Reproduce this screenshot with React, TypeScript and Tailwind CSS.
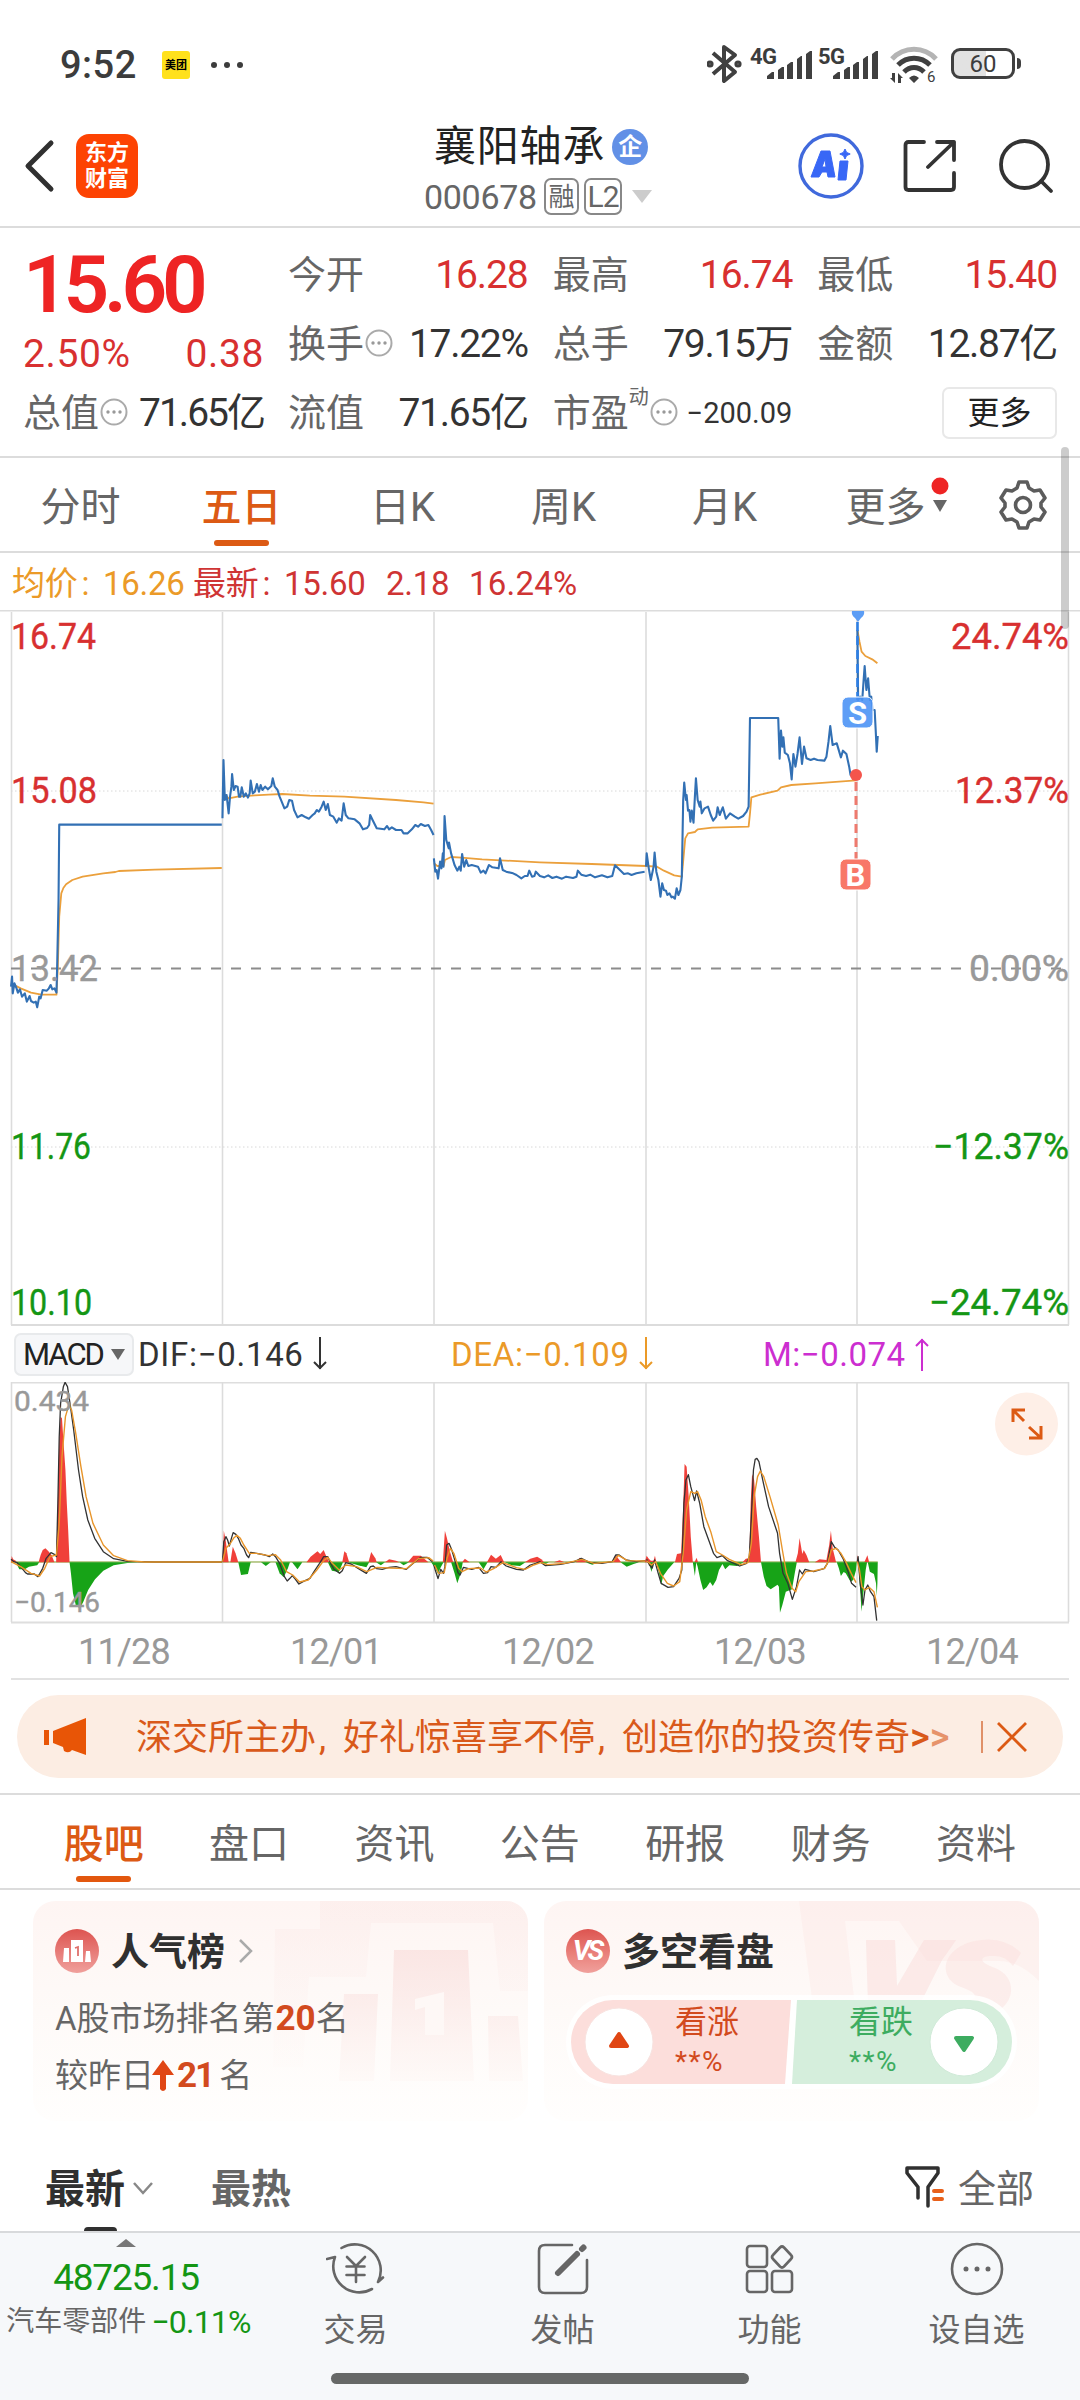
import React from "react";

const FONT = "font-['Roboto','Noto_Sans_CJK_SC',sans-serif]";

const PRICE_SEGMENTS = [
  "32,1160 35,1130 37,1180 42,1150 48,1165 52,1178 58,1168 64,1190 72,1180 78,1205 86,1188 90,1203 98,1208 104,1205 108,1222 114,1190 118,1195 124,1170 136,1172 142,1165 147,1155 152,1168 158,1165 164,1178 166,1100 170,900 172,674 644,674",
  "646,655 649,480 653,600 658,585 664,640 668,590 672,560 674,522 679,570 684,558 690,560 694,590 698,590 702,562 708,590 714,580 720,593 725,580 728,542 734,580 740,575 746,552 752,575 757,555 762,570 770,560 778,568 788,558 792,535 798,560 806,570 812,590 818,605 826,625 834,620 840,600 848,602 854,630 864,652 876,645 888,652 897,656 908,645 914,640 920,630 926,635 934,620 940,605 946,630 952,612 958,645 968,650 978,668 984,655 992,662 998,610 1004,645 1012,655 1030,658 1044,670 1054,688 1066,684 1072,675 1075,645 1082,660 1094,685 1116,688 1124,678 1130,688 1138,682 1150,690 1166,690 1172,700 1184,700 1196,688 1206,675 1214,680 1222,672 1234,678 1244,675 1252,690 1259,705",
  "1260,775 1264,815 1268,810 1272,836 1278,785 1282,805 1286,760 1288,800 1291,648 1296,720 1303,745 1304,728 1310,760 1320,795 1328,812 1334,800 1338,812 1342,762 1348,800 1354,780 1360,798 1370,795 1388,800 1396,818 1404,812 1410,820 1420,795 1430,802 1448,805 1452,775 1460,810 1470,815 1490,820 1500,825 1514,835 1524,828 1532,828 1537,812 1545,830 1552,828 1556,815 1568,828 1580,832 1592,826 1604,834 1616,830 1632,836 1644,830 1664,834 1674,830 1678,812 1688,824 1702,828 1714,824 1728,832 1748,826 1764,832 1778,828 1786,796 1798,808 1812,822 1824,820 1834,825 1848,820 1872,815",
  "1876,800 1878,760 1884,805 1890,840 1898,800 1901,758 1906,815 1912,840 1918,890 1923,850 1928,870 1934,872 1938,885 1944,880 1950,892 1954,890 1960,896 1965,865 1970,885 1976,870 1980,830 1984,600 1987,548 1992,600 1994,585 1998,632 2002,630 2005,665 2009,632 2014,668 2018,590 2021,535 2026,600 2032,620 2034,605 2038,640 2046,625 2056,620 2064,645 2071,662 2080,650 2084,622 2090,645 2099,622 2108,656 2120,640 2134,650 2144,656 2158,648 2168,635 2174,620 2178,354 2260,354 2264,476 2268,392 2272,440 2275,412 2279,458 2288,465 2294,490 2299,538 2304,462 2310,500 2316,462 2322,412 2329,492 2335,440 2342,475 2354,480 2364,476 2374,480 2394,482 2400,470 2406,425 2411,378 2418,435 2430,430 2442,472 2448,452 2458,462 2466,500 2470,525 2476,530 2486,525",
  "2490,90 2492,300 2498,290 2504,300 2508,240 2511,198 2516,270 2521,235 2526,300 2530,290 2534,330 2540,330 2543,390 2546,455 2549,408",
];

const AVERAGE_SEGMENTS = [
  "32,1150 60,1165 90,1178 120,1184 164,1184 168,1100 172,950 178,880 184,864 192,853 210,840 240,830 300,820 335,816 345,813 450,809 644,804",
  "646,600 655,585 664,595 690,590 740,586 780,584 820,582 900,587 1000,590 1150,600 1230,607 1259,611",
  "1260,790 1270,798 1288,798 1292,780 1310,771 1340,773 1400,778 1568,787 1718,792 1876,798",
  "1876,798 1908,800 1928,812 1958,826 1980,830 1986,760 1990,715 1998,700 2018,696 2026,688 2068,683 2174,680 2178,640 2182,592 2208,584 2258,572 2268,562 2298,555 2368,550 2486,541",
  "2490,90 2496,125 2502,155 2513,168 2533,178 2548,190",
];

const DIF_SEGMENTS = [
  "32,808 40,815 50,818 64,835 74,848 80,852 100,852 110,860 116,850 124,835 134,805 148,788 158,793 164,800 168,640 172,440 176,340 184,290 189,277 196,290 204,345 214,420 228,540 240,620 255,690 275,745 300,785 330,806 370,814 450,816 644,816",
  "646,815 650,755 656,740 661,750 666,768 672,745 677,728 685,733 692,745 700,765 708,775 716,795 722,803 728,787 745,790 770,795 782,800 792,792 800,800 812,820 826,860 834,873 842,865 849,857 858,868 868,882 880,875 900,865 912,845 928,820 940,800 952,800 960,820 970,838 986,850 994,842 1004,818 1020,822 1040,835 1064,850 1076,830 1084,828 1094,836 1110,838 1130,832 1150,830 1180,838 1200,820 1222,802 1240,802 1256,815",
  "1260,825 1264,840 1272,866 1280,838 1288,850 1292,830 1297,765 1304,760 1312,780 1322,815 1330,848 1336,855 1346,832 1370,838 1390,832 1404,850 1416,848 1426,830 1440,832 1455,815 1470,828 1500,838 1520,840 1540,825 1556,820 1568,815 1584,827 1628,823 1668,815 1688,805 1713,818 1748,820 1778,815 1788,795 1798,795 1818,810 1848,815 1874,812",
  "1878,808 1886,825 1894,834 1901,810 1910,845 1920,880 1940,892 1956,890 1972,865 1980,840 1986,640 1992,570 1999,554 2006,590 2017,632 2023,603 2032,640 2044,710 2058,750 2072,790 2082,803 2098,797 2113,812 2148,828 2168,820 2176,800 2182,680 2188,540 2193,508 2198,505 2204,515 2216,575 2232,650 2258,730 2264,790 2274,850 2288,880 2301,928 2313,890 2322,840 2330,852 2338,838 2363,845 2393,836 2403,820 2414,755 2424,772 2434,780 2448,805 2463,845 2473,880 2486,892",
  "2490,815 2492,800 2498,880 2506,945 2512,900 2520,885 2528,905 2538,920 2546,992",
];

const DEA_SEGMENTS = [
  "32,815 60,830 90,850 115,858 130,835 145,800 164,795 172,700 180,500 190,380 200,345 208,360 220,430 235,530 250,620 270,700 300,765 330,797 370,812 420,816 644,816",
  "646,815 656,775 668,762 678,745 688,736 698,745 708,765 724,790 745,790 780,797 800,794 815,810 832,845 850,855 870,876 895,870 920,840 940,812 952,802 965,820 985,840 1005,825 1035,830 1065,845 1095,832 1130,834 1180,836 1215,806 1245,803 1258,813",
  "1262,825 1274,850 1290,848 1298,805 1308,775 1318,790 1332,835 1342,845 1360,836 1395,834 1412,846 1435,835 1460,818 1500,833 1525,838 1550,825 1570,818 1590,824 1640,820 1690,808 1725,820 1780,815 1796,796 1822,812 1874,813",
  "1878,812 1892,825 1904,815 1918,850 1938,880 1956,888 1974,875 1984,790 1994,660 2006,605 2018,610 2026,605 2036,630 2048,680 2064,725 2080,785 2098,795 2118,808 2152,824 2172,818 2182,760 2190,620 2200,560 2208,543 2218,560 2236,620 2260,705 2272,780 2284,850 2300,895 2311,905 2320,875 2340,845 2363,843 2395,835 2405,815 2414,780 2428,775 2442,790 2456,815 2472,850 2486,878",
  "2490,815 2496,840 2503,890 2512,900 2524,892 2538,905 2548,952",
];

const RED_BARS = [
  "32,817 34,798 38,808 46,812 46,817",
  "112,817 118,795 124,780 132,775 142,785 150,796 158,817",
  "163,817 168,640 172,456 176,380 180,385 184,450 190,540 194,640 198,720 202,817",
  "646,817 650,722 656,755 664,817",
  "669,817 676,770 684,790 692,817",
  "890,817 902,800 922,784 930,792 940,780 948,800 956,817",
  "994,817 1000,784 1006,790 1014,817",
  "1070,817 1078,786 1090,805 1094,817",
  "1118,817 1130,808 1150,812 1160,817",
  "1184,817 1200,797 1222,797 1244,817",
  "1286,817 1292,722 1298,745 1306,782 1316,817",
  "1342,817 1350,806 1364,817",
  "1414,817 1426,794 1440,806 1454,795 1464,817",
  "1524,817 1540,806 1560,800 1572,808 1580,817",
  "1608,817 1625,811 1640,817 1672,817 1684,803 1704,817",
  "1780,817 1788,796 1804,817",
  "1872,817 1878,797 1884,806 1890,812 1898,812 1902,797 1906,817",
  "1960,817 1966,792 1978,790 1984,650 1988,522 1994,530 2000,620 2006,740 2012,817",
  "2017,817 2023,803 2027,817",
  "2156,817 2166,806 2176,805 2180,640 2184,552 2190,570 2196,650 2204,740 2210,817",
  "2310,817 2317,790 2322,744 2330,792 2334,780 2342,795 2350,817",
  "2366,817 2380,808 2400,810 2408,765 2413,722 2418,775 2428,817",
  "2488,817 2490,795 2494,817",
  "2510,817 2519,796 2524,817",
];

const GREEN_BARS = [
  "46,817 56,838 72,838 84,830 108,826 114,817",
  "202,817 206,850 212,910 220,945 232,955 242,935 256,900 276,868 300,842 330,826 370,819 400,817",
  "692,817 700,855 720,852 728,817",
  "758,817 772,828 786,817",
  "800,817 812,850 824,862 836,835 842,817",
  "848,817 864,838 878,817",
  "952,817 964,842 984,846 996,817",
  "1010,817 1040,826 1064,832 1072,817",
  "1092,817 1106,826 1118,817",
  "1160,817 1172,826 1188,817",
  "1252,817 1264,835 1272,852 1280,832 1288,817",
  "1310,817 1320,850 1328,880 1338,850 1344,817",
  "1390,817 1404,838 1416,817",
  "1466,817 1486,826 1510,828 1526,817",
  "1572,817 1580,824 1594,817",
  "1700,817 1720,824 1740,817",
  "1802,817 1820,830 1840,822 1856,817",
  "1884,817 1892,846 1898,817",
  "1906,817 1914,850 1920,885 1926,858 1940,838 1958,817",
  "2012,817 2018,858 2022,817 2026,830 2034,870 2042,900 2052,892 2062,876 2070,888 2080,870 2088,840 2098,822 2106,838 2118,826 2140,828 2160,817",
  "2210,817 2218,860 2226,888 2238,898 2258,884 2262,890 2265,968 2272,945 2282,905 2300,898 2308,850 2314,817",
  "2430,817 2436,835 2442,858 2450,846 2456,850 2470,875 2478,870 2486,840 2488,817",
  "2492,817 2498,900 2502,965 2508,900 2514,840 2518,817",
  "2520,817 2526,845 2538,852 2544,880 2546,918 2548,880 2549,817",
];

const GRID_X = [11.5, 222.5, 434, 646, 857, 1068.5];

const Lines = ({ data, color, width }: { data: string[]; color: string; width: number }) => (
  <>
    {data.map((points) => (
      <polyline key={points} points={points} fill="none" stroke={color} strokeWidth={width} strokeLinejoin="round" vectorEffect="non-scaling-stroke" />
    ))}
  </>
);

const Label = ({ x, y, w, size = 36, fill, end, children }: { x: number; y: number; w: number; size?: number; fill: string; end?: boolean; children: string }) => (
  <text x={x} y={y} fontSize={size} fill={fill} stroke={fill} strokeWidth="0.4" textLength={w} lengthAdjust="spacingAndGlyphs" textAnchor={end ? "end" : "start"}>
    {children}
  </text>
);

const Signal = () => (
  <svg width="45" height="30" viewBox="0 0 45 30" fill="#404040">
    <path d="M0 29v-3l5-4h2v7zM11 29V20l4-3h2v12zM20 29V15l4-3h2v17zM30 29V9l4-3h1v23zM39 29V4l4-3h2v28z" />
  </svg>
);

const StatusBar = () => (
  <div className="flex h-[115px] pt-[42px] text-[#3c3c3c]">
    <div className="flex h-[46px] w-[707px] items-center pl-[60px]">
      <span className="w-[80px] text-[38px] font-medium leading-none tracking-[0.5px]">9:52</span>
      <span className="ml-[22px] flex h-[28px] w-[28px] items-center justify-center rounded-[3px] bg-[#ffe11c] text-[11px] font-bold leading-none text-black">美团</span>
      <span className="ml-[21px] flex gap-[7px]">
        <i className="h-[6px] w-[6px] rounded-full bg-[#3c3c3c]" />
        <i className="h-[6px] w-[6px] rounded-full bg-[#3c3c3c]" />
        <i className="h-[6px] w-[6px] rounded-full bg-[#3c3c3c]" />
      </span>
    </div>
    <svg width="36" height="42" viewBox="0 0 36 42" className="mt-px" fill="none" stroke="#404040" strokeWidth="4" strokeLinejoin="round">
      <path d="M6 10l22 19-11 9V4l11 8L6 31" />
      <circle cx="3" cy="21" r="1.6" />
      <circle cx="31" cy="21" r="1.6" />
    </svg>
    <span className="ml-[7px] mt-[4px] w-[29px] text-[22px] font-bold leading-none tracking-[-0.5px]">4G</span>
    <div className="-ml-[12px] mt-[8px]"><Signal /></div>
    <span className="ml-[6px] mt-[4px] w-[29px] text-[22px] font-bold leading-none tracking-[-0.5px]">5G</span>
    <div className="-ml-[14px] mt-[8px]"><Signal /></div>
    <svg width="48" height="38" viewBox="0 0 48 38" className="ml-[12px] mt-[5px] overflow-visible" fill="none">
      <path d="M2 12C14-1 34-1 46 12" stroke="#b4b4b4" strokeWidth="5" />
      <path d="M8 18c9-9 23-9 32 0M14 25c6-6 14-6 20 0" stroke="#404040" strokeWidth="5" />
      <path d="M19 31q5-5 10 0l-5 5zM5 26v10l-5-5h2v-5zM8 36V26l5 5h-2v5z" fill="#404040" />
      <text x="37" y="35" fontSize="15" fill="#404040">6</text>
    </svg>
    <div className="ml-[13px] mt-[6px] flex h-[31px] w-[64px] items-center justify-center rounded-[9px] border-[3px] border-[#404040] bg-gradient-to-r from-[#e2e2e2] from-55% to-white to-55% text-[24px] leading-none">60</div>
    <i className="ml-[2px] mt-[16px] h-[11px] w-[4px] rounded-r bg-[#404040]" />
  </div>
);

const Header = () => (
  <header className="flex h-[113px] border-b-2 border-[#dcdcdc]">
    <svg width="32" height="56" viewBox="0 0 32 56" className="ml-[24px] mt-[23px]" fill="none" stroke="#303030" strokeWidth="5" strokeLinecap="round" strokeLinejoin="round">
      <path d="M27 5L4 28l23 23" />
    </svg>
    <div className="ml-[20px] mt-[19px] flex h-[64px] w-[62px] flex-col items-center justify-center rounded-[13px] bg-[#fd4303] text-[22px] font-bold leading-[26px] text-white">
      <span>东方</span>
      <span>财富</span>
    </div>
    <div className="ml-[286px] w-[372px]">
      <div className="mt-[8px] flex h-[48px] items-center text-[42px] leading-none text-[#222]">
        <span className="ml-[10px] tracking-[0.8px]">襄阳轴承</span>
        <span className="ml-[7px] flex h-[36px] w-[36px] items-center justify-center rounded-full bg-[#6290e6] text-[24px] font-bold text-white">企</span>
      </div>
      <div className="mt-[6px] flex h-[40px] items-center text-[#666]">
        <span className="w-[120px] text-[34px] leading-none tracking-[-0.3px]">000678</span>
        <span className="flex h-[37px] w-[35px] items-center justify-center rounded-[7px] border-2 border-[#888] text-[26px] leading-none">融</span>
        <span className="ml-[5px] flex h-[37px] w-[38px] items-center justify-center rounded-[7px] border-2 border-[#888] text-[30px] leading-none tracking-[-1px]">L2</span>
        <svg width="20" height="13" viewBox="0 0 20 13" className="ml-[10px]"><path d="M0 0h20L10 13z" fill="#ccc" /></svg>
      </div>
    </div>
    <svg width="66" height="66" viewBox="0 0 66 66" className="ml-[2px] mt-[18px]">
      <circle cx="33" cy="33" r="31" fill="none" stroke="#4069dc" strokeWidth="3.4" />
      <path d="M23 18h9l5 26h-7l-1-5h-5l-3 5h-8zM27 26l-3 8h4zM42 28h8l-2 19h-8zM47 16l1.6 3.4 3.6 1.6-3.6 1.6L47 26l-1.6-3.4-3.6-1.6 3.6-1.6z" fill="#3867f6" stroke="#3867f6" strokeLinejoin="round" fillRule="evenodd" />
    </svg>
    <svg width="54" height="54" viewBox="0 0 54 54" className="ml-[39px] mt-[25px]" fill="none" stroke="#333" strokeWidth="3.8" strokeLinecap="round" strokeLinejoin="round">
      <path d="M21 2H5.500Q2.500 2 2.500 5V47Q2.500 50 5.500 50H48Q51 50 51 47V33M34 2h17v18M51 2L25 27" />
    </svg>
    <svg width="56" height="56" viewBox="0 0 56 56" className="ml-[41px] mt-[23px]" fill="none" stroke="#333" strokeWidth="3.8" strokeLinecap="round">
      <circle cx="26.500" cy="26.500" r="23.500" />
      <path d="M43 43l10 10" />
    </svg>
  </header>
);

const Dots = () => (
  <svg width="28" height="28" viewBox="0 0 28 28" className="mb-[2px] ml-px shrink-0">
    <circle cx="14" cy="14" r="12.500" fill="none" stroke="#aaa" strokeWidth="2" />
    <g fill="#999"><circle cx="8" cy="14" r="1.700" /><circle cx="14" cy="14" r="1.700" /><circle cx="20" cy="14" r="1.700" /></g>
  </svg>
);

const Cell = ({ label, value, red, info }: { label: string; value: string; red?: boolean; info?: boolean }) => (
  <div className="flex h-[69px] items-center justify-between">
    <span className="flex items-center text-[38px] leading-none text-[#666]">{label}{info && <Dots />}</span>
    <span className={red ? "text-[39px] leading-none tracking-[-1.1px] text-[#d83030]" : "text-[39px] leading-none tracking-[-1.3px] text-[#333]"}>{value}</span>
  </div>
);

const Quote = () => (
  <section className="flex h-[230px] border-b-2 border-[#dcdcdc]">
    <div className="ml-[23px] w-[241px] pt-[19px]">
      <div className="h-[76px] text-[80px] font-semibold leading-[76px] tracking-[-5.200px] text-[#ee2424]">15.60</div>
      <div className="mt-[11px] flex h-[42px] items-center justify-between text-[39px] leading-none tracking-[0.6px] text-[#d83030]">
        <span>2.50%</span>
        <span>0.38</span>
      </div>
      <div className="mt-[3px] flex h-[69px] items-center justify-between">
        <span className="flex items-center text-[38px] leading-none text-[#666]">总值<Dots /></span>
        <span className="text-[39px] leading-none tracking-[-2px] text-[#333]">71.65亿</span>
      </div>
    </div>
    <div className="ml-[24px] grid w-[769px] grid-cols-3 content-start gap-x-[25px] pt-[13px]">
      <Cell label="今开" value="16.28" red />
      <Cell label="最高" value="16.74" red />
      <Cell label="最低" value="15.40" red />
      <Cell label="换手" value="17.22%" info />
      <Cell label="总手" value="79.15万" />
      <Cell label="金额" value="12.87亿" />
      <Cell label="流值" value="71.65亿" />
      <div className="flex h-[69px] items-center text-[38px] leading-none text-[#666]">
        <span>市盈</span>
        <span className="mb-[32px] text-[20px] leading-none">动</span>
        <Dots />
        <span className="ml-auto text-[29px] leading-none text-[#333]">−200.09</span>
      </div>
      <div className="flex h-[69px] items-center justify-end">
        <span className="flex h-[52px] w-[115px] items-center justify-center rounded-[7px] border-2 border-[#e8e8e8] text-[32px] leading-none text-[#222]">更多</span>
      </div>
    </div>
  </section>
);

const PERIODS = ["分时", "五日", "日K", "周K", "月K", "更多"];

const PeriodTabs = () => (
  <nav className="flex h-[95px] border-b-2 border-[#dcdcdc] text-[40px] leading-none text-[#666]">
    {PERIODS.map((name) => (
      <div key={name} className="relative flex w-[161px] flex-col items-center pt-[30px]">
        <span className={name === "五日" ? "font-medium text-[#dc5a14]" : ""}>{name}</span>
        {name === "五日" && <i className="mt-[12px] h-[6px] w-[55px] rounded-full bg-[#dc5a14]" />}
        {name === "更多" && (
          <svg width="18" height="36" viewBox="0 0 18 36" className="absolute right-[17px] top-[19px]">
            <circle cx="9" cy="9" r="8.500" fill="#ee2424" />
            <path d="M2 23h14L9 35z" fill="#666" />
          </svg>
        )}
      </div>
    ))}
    <svg width="50" height="50" viewBox="0 0 50 50" className="ml-[32px] mt-[22px]" fill="none" stroke="#5c5c5c" strokeWidth="3.600" strokeLinejoin="round">
      <path d="M21 2h8l2 6 5 3 6-1 5 8-4 5v4l4 5-5 8-6-1-5 3-2 6h-8l-2-6-5-3-6 1-5-8 4-5v-4l-4-5 5-8 6 1 5-3z" />
      <circle cx="25" cy="25" r="7.500" />
    </svg>
  </nav>
);

const Legend = () => (
  <div className="flex h-[58px] items-center pl-[12px] pt-[4px] text-[33px] leading-none tracking-[-0.3px] text-[#cf3434]">
    <span className="w-[91px] text-[#eb9a28]">均价<span className="ml-[4px]">:</span></span>
    <span className="w-[90px] text-[#eb9a28]">16.26</span>
    <span className="w-[91px]">最新<span className="ml-[4px]">:</span></span>
    <span className="w-[102px]">15.60</span>
    <span className="w-[83px]">2.18</span>
    <span className="tracking-[0.2px]">16.24%</span>
  </div>
);

const PriceChart = () => (
  <svg width="1080" height="716" viewBox="0 610 1080 716" className="block shrink-0">
    <path d="M0 610.500H1080" stroke="#dcdcdc" strokeWidth="2" />
    {GRID_X.map((x) => <path key={x} d={`M${x} 612V1325`} stroke="#dcdcdc" strokeWidth="1.600" />)}
    <path d="M11 1325H1069" stroke="#dcdcdc" strokeWidth="2" />
    <path d="M11 791H1069M11 1147H1069" stroke="#d8d8d8" strokeDasharray="1.500 2.500" />
    <path d="M11 968.500H1069" stroke="#8c8c8c" strokeWidth="1.800" strokeDasharray="10 10" />
    <g transform="translate(0 600) scale(.34435 .33333)">
      <Lines data={AVERAGE_SEGMENTS} color="#eba03c" width={1.8} />
      <Lines data={PRICE_SEGMENTS} color="#3270b4" width={2.1} />
    </g>
    <path d="M856 782V862" stroke="#ee7a6e" strokeWidth="3" strokeDasharray="9 5" />
    <circle cx="856" cy="775" r="6" fill="#f4554c" />
    <path d="M852 611h12q1 4-3 7l-3 4-3-4q-4-3-3-7z" fill="#5c9df5" />
    <path d="M857.500 622V700" stroke="#2e7fe4" strokeWidth="2.600" strokeDasharray="9 5" />
    <rect x="842" y="697" width="31" height="31" rx="6" fill="#4d94f5" fillOpacity=".9" stroke="#fff" />
    <rect x="840" y="859" width="31" height="31" rx="6" fill="#f87868" stroke="#fff" />
    <g fontFamily="Roboto" fontWeight="700" fontSize="31" fill="#fff" textAnchor="middle">
      <text x="857.500" y="724">S</text>
      <text x="855.500" y="886">B</text>
    </g>
    <g fontFamily="Roboto">
      <Label x={11} y={649} w={85} fill="#d83030">16.74</Label>
      <Label x={11} y={803} w={86} fill="#d83030">15.08</Label>
      <Label x={11} y={981} w={87} fill="#999">13.42</Label>
      <Label x={11} y={1159} w={80} fill="#149614">11.76</Label>
      <Label x={11} y={1315} w={81} fill="#149614">10.10</Label>
      <Label end x={1069} y={649} w={118} fill="#d83030">24.74%</Label>
      <Label end x={1069} y={803} w={114} fill="#d83030">12.37%</Label>
      <Label end x={1069} y={981} w={100} fill="#999">0.00%</Label>
      <Label end x={1069} y={1159} w={136} fill="#149614">−12.37%</Label>
      <Label end x={1069} y={1315} w={140} fill="#149614">−24.74%</Label>
    </g>
  </svg>
);

const Arrow = ({ up }: { up?: boolean }) => (
  <svg width="14" height="34" viewBox="0 0 14 34" className={up ? "shrink-0 rotate-180" : "shrink-0"} fill="none" stroke="currentColor" strokeWidth="2">
    <path d="M7 0v32M1 25l6 6 6-6" />
  </svg>
);

const MacdHeader = () => (
  <div className="flex h-[56px] items-center pl-[14px] text-[33px] leading-none text-[#333]">
    <div className="flex h-[43px] w-[120px] items-center rounded-[7px] border-2 border-[#e8eaec] bg-[#f6f7f9] pl-[7px] text-[31px] tracking-[-2px] text-[#222]">
      <span className="w-[87px]">MACD</span>
      <svg width="14" height="11" viewBox="0 0 14 11" className="ml-px"><path d="M0 0h14L7 11z" fill="#666" /></svg>
    </div>
    <span className="ml-[4px] w-[175px] whitespace-nowrap tracking-[0.7px]">DIF:−0.146</span>
    <Arrow />
    <div className="ml-[124px] flex items-center text-[#eb9a28]">
      <span className="w-[188px] whitespace-nowrap tracking-[0.7px]">DEA:−0.109</span>
      <Arrow />
    </div>
    <div className="ml-[110px] flex items-center text-[#cc2ed0]">
      <span className="w-[152px] whitespace-nowrap tracking-[0.5px]">M:−0.074</span>
      <Arrow up />
    </div>
  </div>
);

const MacdChart = () => (
  <svg width="1080" height="242" viewBox="0 1382 1080 242" className="block shrink-0">
    <path d="M11 1382.700H1069M11 1622.500H1069" stroke="#dedede" strokeWidth="1.800" />
    {GRID_X.map((x) => <path key={x} d={`M${x} 1382V1622`} stroke="#dcdcdc" strokeWidth="1.600" />)}
    <g transform="translate(0 1290) scale(.34435 .33333)">
      <path d="M32 816H2549" stroke="#7c9a28" strokeWidth="1" vectorEffect="non-scaling-stroke" />
      {RED_BARS.map((p) => <polygon key={p} points={p} fill="#f0403a" />)}
      {GREEN_BARS.map((p) => <polygon key={p} points={p} fill="#17a317" />)}
      <Lines data={DIF_SEGMENTS} color="#333333" width={1.3} />
      <Lines data={DEA_SEGMENTS} color="#e8952a" width={1.4} />
    </g>
    <g fontFamily="Roboto">
      <Label x={14} y={1411} w={75} size={28} fill="#999">0.434</Label>
      <Label x={14} y={1612} w={86} size={28} fill="#999">−0.146</Label>
    </g>
    <circle cx="1026.500" cy="1424" r="31.500" fill="#feefe7" />
    <path d="M1013 1422v-12h12M1013 1410l11 11M1041 1426v12h-12M1041 1438l-12-11" fill="none" stroke="#dc5a14" strokeWidth="3" />
  </svg>
);

const Dates = () => (
  <div className="ml-[11px] h-[56px] w-[1058px] border-b-2 border-[#e2e2e2]">
    <div className="ml-[7px] grid h-full w-[1060px] grid-cols-5 items-center pt-px text-center text-[36px] leading-none tracking-[-0.8px] text-[#999]">
      {["11/28", "12/01", "12/02", "12/03", "12/04"].map((d) => <span key={d}>{d}</span>)}
    </div>
  </div>
);

const Comma = () => <span className="inline-block w-[27px] pl-[3px]">,</span>;

const Banner = () => (
  <div className="h-[115px] border-b-2 border-[#dcdcdc] pt-[15px]">
    <div className="ml-[17px] flex h-[83px] w-[1046px] items-center rounded-full bg-[#fcede3] text-[#d9591a]">
      <svg width="44" height="38" viewBox="0 0 44 38" className="ml-[27px]" fill="#e85506">
        <path d="M0 12h5v15H0zM9 13L42 0v37l-14-5q-3 4-8 1l-1-4-10-4z" />
      </svg>
      <div className="ml-[48px] w-[842px] whitespace-nowrap pt-px text-[36px] leading-[44px]">
        深交所主办<Comma />好礼惊喜享不停<Comma />创造你的投资传奇<span className="text-[38px] font-medium">&gt;<span className="opacity-60">&gt;</span></span>
      </div>
      <i className="ml-[3px] h-[32px] w-[2px] bg-[#e09068]" />
      <svg width="30" height="30" viewBox="0 0 30 30" className="ml-[14px]" stroke="#dc5a14" strokeWidth="2.800"><path d="M1 1l28 28M29 1L1 29" /></svg>
    </div>
  </div>
);

const SectionTabs = () => (
  <nav className="flex h-[95px] border-b-2 border-[#dcdcdc] pl-[31px] text-[40px] leading-none text-[#666]">
    {["股吧", "盘口", "资讯", "公告", "研报", "财务", "资料"].map((name, i) => (
      <div key={name} className="flex w-[145.400px] flex-col items-center pt-[30px]">
        <span className={i === 0 ? "font-medium text-[#dc5a14]" : ""}>{name}</span>
        {i === 0 && <i className="mt-[11px] h-[6px] w-[55px] rounded-full bg-[#e2570e]" />}
      </div>
    ))}
  </nav>
);

const RankCard = () => (
  <div className="relative h-[220px] w-[495px] overflow-hidden rounded-[22px] bg-gradient-to-b from-[#fef5f3] via-[#fefaf8] to-[#fffefd] pl-[22px] pt-[28px] text-[#666]">
    <svg width="255" height="220" viewBox="0 0 255 220" className="absolute right-0 top-0">
      <defs>
        <linearGradient id="fade" x1="0" y1="0" x2="0" y2="1">
          <stop offset="0" stopColor="#f9dedc" />
          <stop offset="1" stopColor="#fef8f6" />
        </linearGradient>
      </defs>
      <path d="M2 28h45V0h208v90h-28L220 22H98l-5 54H36l-6 90H0z" fill="url(#fade)" opacity=".25" />
      <path d="M71 93h34l-4 87H66zM121 49h74l6 131h-84zM215 115h30l5 65h-34z" fill="url(#fade)" opacity=".7" />
      <path d="M142 98l29-7v43h-19v-28l-10 3z" fill="#fef8f6" />
    </svg>
    <div className="relative flex h-[44px] items-center">
      <svg width="44" height="44" viewBox="0 0 44 44">
        <defs><linearGradient id="badge" x1="0" y1="0" x2="0" y2="1"><stop stopColor="#dd5450" /><stop offset="1" stopColor="#f0a09c" /></linearGradient></defs>
        <circle cx="22" cy="22" r="22" fill="url(#badge)" />
        <path d="M9 19h5v14H8zM16 11h12v22H16zM31 22h4l1 11h-6z" fill="#fff" />
        <path d="M20 19l3-1v9" fill="none" stroke="#df706c" strokeWidth="1.800" />
      </svg>
      <span className="ml-[12px] pt-[2px] text-[38px] font-bold leading-none text-[#303030]">人气榜</span>
      <svg width="14" height="24" viewBox="0 0 14 24" className="ml-[14px]" fill="none" stroke="#aaa" strokeWidth="2.500"><path d="M1 1l11 11L1 23" /></svg>
    </div>
    <div className="relative mt-[25px] flex h-[40px] items-center text-[33px] leading-none">
      A股市场排名第<span className="ml-px text-[35px] font-bold text-[#d24a1e]">20</span>名
    </div>
    <div className="relative mt-[17px] flex h-[40px] items-center text-[33px] leading-none">
      较昨日
      <svg width="22" height="31" viewBox="0 0 22 31" className="-ml-[2px] mr-[3px]" fill="#e04614"><path d="M11 0l11 15h-8v14q-3 4-6 0V15H0z" /></svg>
      <span className="text-[35px] font-bold tracking-[-2px] text-[#d24a1e]">21</span>
      <span className="ml-[6px]">名</span>
    </div>
  </div>
);

const VoteCard = () => (
  <div className="relative h-[220px] w-[495px] overflow-hidden rounded-[22px] bg-gradient-to-b from-[#fef5f3] via-[#fefaf8] to-[#fffefd] pl-[22px] pt-[28px]">
    <svg width="240" height="140" viewBox="0 0 240 140" className="absolute right-0 top-0">
      <path d="M0 0h240v80q-20-20-40-20h-72l-28-40H46l10 85H14z" fill="#fbe4e1" opacity=".35" />
      <path d="M67 39h29l2 46 27-46h32q-8 12-14 20l-22 44H69z" fill="#f9dcda" opacity=".5" />
      <path d="M222 52q-18-18-46-12c-34 7-38 38-14 46 18 6 18 13 4 13h-24v16h40c34-3 40-38 14-48-18-6-16-13 0-12 12 1 14 6 18 10z" fill="#f9dcda" opacity=".4" />
    </svg>
    <div className="relative flex h-[44px] items-center">
      <span className="flex h-[44px] w-[44px] items-center justify-center rounded-full bg-gradient-to-b from-[#dd5450] to-[#f0a09c] pr-[2px] text-[28px] font-bold italic leading-none tracking-[-3px] text-white">VS</span>
      <span className="ml-[12px] pt-[2px] text-[38px] font-bold leading-none text-[#303030]">多空看盘</span>
    </div>
    <div className="relative mt-[22px] h-[94px] w-[451px]">
      <svg width="451" height="94" viewBox="0 0 451 94" className="absolute left-0 top-0">
        <rect width="451" height="94" rx="47" fill="#fff" opacity=".85" />
        <path d="M47 5H225L219 89H47a42 42 0 0 1 0-84z" fill="#fcdedb" />
        <path d="M231 5H404a42 42 0 0 1 0 84H226z" fill="#d5eedc" />
        <circle cx="53" cy="47" r="34" fill="#fff" stroke="#f8e3e0" />
        <circle cx="398" cy="47" r="34" fill="#fff" stroke="#d0ead8" />
        <path d="M53 39l8 12H45z" fill="#e04614" stroke="#e04614" strokeWidth="4" strokeLinejoin="round" />
        <path d="M398 55l8-12h-16z" fill="#3dac60" stroke="#3dac60" strokeWidth="4" strokeLinejoin="round" />
      </svg>
      <div className="relative flex pt-[9px] text-[32px] leading-[36px]">
        <div className="ml-[109px] w-[174px] text-[#d24a1e]">
          <div>看涨</div>
          <div className="mt-[4px] text-[28px] tracking-[1.500px]">**%</div>
        </div>
        <div className="text-[#3dac60]">
          <div>看跌</div>
          <div className="mt-[4px] text-[28px] tracking-[1.500px]">**%</div>
        </div>
      </div>
    </div>
  </div>
);

const SortRow = () => (
  <div className="flex h-[110px] pt-[49px] text-[40px] leading-none">
    <div className="ml-[45px] flex w-[166px]">
      <div className="h-[61px]">
        <div className="font-bold text-[#303030]">最新</div>
        <i className="ml-[39px] mt-[17px] block h-[6px] w-[33px] rounded-t-[4px] bg-[#303030]" />
      </div>
      <svg width="20" height="14" viewBox="0 0 20 14" className="ml-[8px] mt-[12px]" fill="none" stroke="#888" strokeWidth="2.500"><path d="M1 1l9 10 9-10" /></svg>
    </div>
    <span className="font-bold text-[#666]">最热</span>
    <svg width="42" height="44" viewBox="0 0 42 44" className="-mt-[5px] ml-[613px]" fill="none" stroke="#303030" strokeWidth="3.500" strokeLinecap="round" strokeLinejoin="round">
      <path d="M14 33V22L3 8V3H34v5L24 22V41" />
      <path d="M30 26h8M30 34h8" stroke="#e8601a" strokeWidth="4" />
    </svg>
    <span className="ml-[12px] text-[38px] text-[#666]">全部</span>
  </div>
);

const NavItem = ({ label, children }: { label: string; children: React.ReactNode }) => (
  <div className="flex w-[207px] flex-col items-center pt-[8px] text-[32px] leading-none text-[#666]">
    <svg width="60" height="56" viewBox="0 0 60 56" fill="none" stroke="#666" strokeWidth="2.600" strokeLinejoin="round" strokeLinecap="round">{children}</svg>
    <span className="mt-[17px]">{label}</span>
  </div>
);

const BottomNav = () => (
  <footer className="relative flex h-[169px] border-t-2 border-[#d8dadc] bg-[#f6f8fa]">
    <div className="flex w-[252px] flex-col items-center pt-[6px]">
      <svg width="20" height="8" viewBox="0 0 20 8"><path d="M0 8L10 0l10 8z" fill="#777" /></svg>
      <span className="mt-[12px] text-[37px] leading-none tracking-[-1.200px] text-[#149614]">48725.15</span>
      <span className="ml-[5px] mt-[10px] flex items-center whitespace-nowrap text-[28px] leading-none text-[#666]">汽车零部件<span className="ml-[5px] text-[32px] tracking-[-0.8px] text-[#149614]">−0.11%</span></span>
    </div>
    <NavItem label="交易">
      <path d="M15.500 7A26 26 0 0 1 52 41L57 36.500M46 48A26 26 0 0 1 9 16L1 18" />
      <path d="M21 16l9 9 9-9M20.500 25.500h18M20.500 34h18M30 25v16" />
    </NavItem>
    <NavItem label="发帖">
      <path d="M39 4H12Q6 4 6 10V46Q6 52 12 52H48Q54 52 54 46V19" />
      <path d="M25 32L44 13M49 8l1.500-1.500" strokeWidth="6" />
    </NavItem>
    <NavItem label="功能">
      <rect x="7" y="5" width="20" height="21" rx="3" />
      <rect x="7" y="30" width="20" height="21" rx="3" />
      <rect x="32" y="30" width="20" height="21" rx="3" />
      <path d="M40 6.500q2-2 4 0l7 7.500q2 2 0 4l-7 7.500q-2 2-4 0L33 18q-2-2 0-4z" />
    </NavItem>
    <NavItem label="设自选">
      <circle cx="30" cy="28" r="25" />
      <path d="M19 28h.01M30 28h.01M41 28h.01" strokeWidth="5" />
    </NavItem>
    <i className="absolute bottom-[16px] left-[331px] h-[11px] w-[418px] rounded-full bg-[#666867]" />
  </footer>
);

export default function App() {
  return (
    <main className={`relative flex h-[2400px] w-[1080px] flex-col overflow-hidden bg-white ${FONT}`}>
      <StatusBar />
      <Header />
      <Quote />
      <PeriodTabs />
      <Legend />
      <PriceChart />
      <MacdHeader />
      <MacdChart />
      <Dates />
      <Banner />
      <SectionTabs />
      <div className="flex h-[231px] gap-[16px] pl-[33px] pt-[11px]">
        <RankCard />
        <VoteCard />
      </div>
      <SortRow />
      <BottomNav />
      <i className="absolute left-[1061px] top-[447px] h-[182px] w-[8px] rounded-full bg-black/20" />
    </main>
  );
}
